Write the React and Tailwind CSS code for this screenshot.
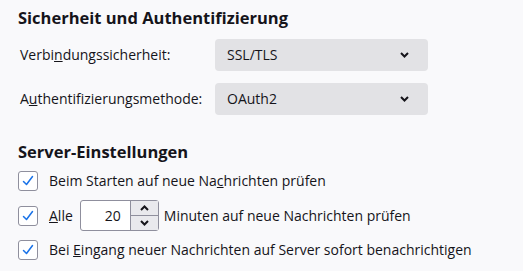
import React from "react";

function Check() {
  return (
    <span className="flex h-[20px] w-[20px] shrink-0 items-center justify-center rounded-[3px] border border-[#8f8f9d] bg-white">
      <svg width="14" height="14" viewBox="0 0 14 14" fill="none">
        <path d="M2.5 7.5 L5.5 10.5 L11.5 2.5" stroke="#1a73e8" strokeWidth="1.5" strokeLinecap="round" strokeLinejoin="round" />
      </svg>
    </span>
  );
}

function Chevron() {
  return (
    <svg width="9" height="6" viewBox="0 0 9 6" fill="none">
      <path d="M1 1 L4.5 4.5 L8 1" stroke="#15141a" strokeWidth="2" />
    </svg>
  );
}

function Select({ value }) {
  return (
    <div className="flex h-[32px] w-[213px] items-center justify-between rounded-[4px] bg-[#e2e2e5] pl-[12px] pr-[19px]">
      <span>{value}</span>
      <Chevron />
    </div>
  );
}

export default function App() {
  return (
    <div className="h-[271px] w-[523px] bg-[#f9f9fb] pl-[18px] pt-[6px] text-[14px] leading-[20px] text-[#15141a]" style={{ fontFamily: '"Open Sans", "Noto Sans", sans-serif' }}>
      <h1 className="text-[16.5px] font-bold leading-[24px]">Sicherheit und Authentifizierung</h1>
      <div className="mt-[9px] flex items-center pl-[2px]">
        <span className="w-[195px]">Verbi<u>n</u>dungssicherheit:</span>
        <Select value="SSL/TLS" />
      </div>
      <div className="mt-[12px] flex items-center pl-[2px]">
        <span className="w-[195px]">A<u>u</u>thentifizierungsmethode:</span>
        <Select value="OAuth2" />
      </div>
      <h2 className="mt-[25px] text-[16.5px] font-bold leading-[24px]">Server-Einstellungen</h2>
      <div className="mt-[7px] flex flex-col gap-[9px]">
        <div className="flex items-center gap-[11px]">
          <Check />
          <span>Beim Starten auf neue Na<u>c</u>hrichten prüfen</span>
        </div>
        <div className="flex items-center">
          <Check />
          <span className="ml-[11px]"><u>A</u>lle</span>
          <div className="ml-[7px] flex h-[31px] w-[79px] rounded-[3px] border border-[#8f8f9d] bg-white">
            <span className="flex flex-1 items-center justify-end pr-[9px]">20</span>
            <div className="my-[0px] mr-[0px] flex w-[28px] flex-col border-l border-[#8f8f9d]">
              <span className="flex flex-1 items-center justify-center border-b border-[#8f8f9d] bg-[#e9e9ed]">
                <svg width="9" height="6" viewBox="0 0 9 6"><path d="M1 5 L4.5 1.5 L8 5" stroke="#15141a" strokeWidth="2" fill="none" /></svg>
              </span>
              <span className="flex flex-1 items-center justify-center bg-[#e9e9ed]">
                <svg width="9" height="6" viewBox="0 0 9 6"><path d="M1 1 L4.5 4.5 L8 1" stroke="#15141a" strokeWidth="2" fill="none" /></svg>
              </span>
            </div>
          </div>
          <span className="ml-[5px]">Minuten auf neue Nachrichten prüfen</span>
        </div>
        <div className="flex items-center gap-[11px]">
          <Check />
          <span>Bei <u>E</u>ingang neuer Nachrichten auf Server sofort benachrichtigen</span>
        </div>
      </div>
    </div>
  );
}
